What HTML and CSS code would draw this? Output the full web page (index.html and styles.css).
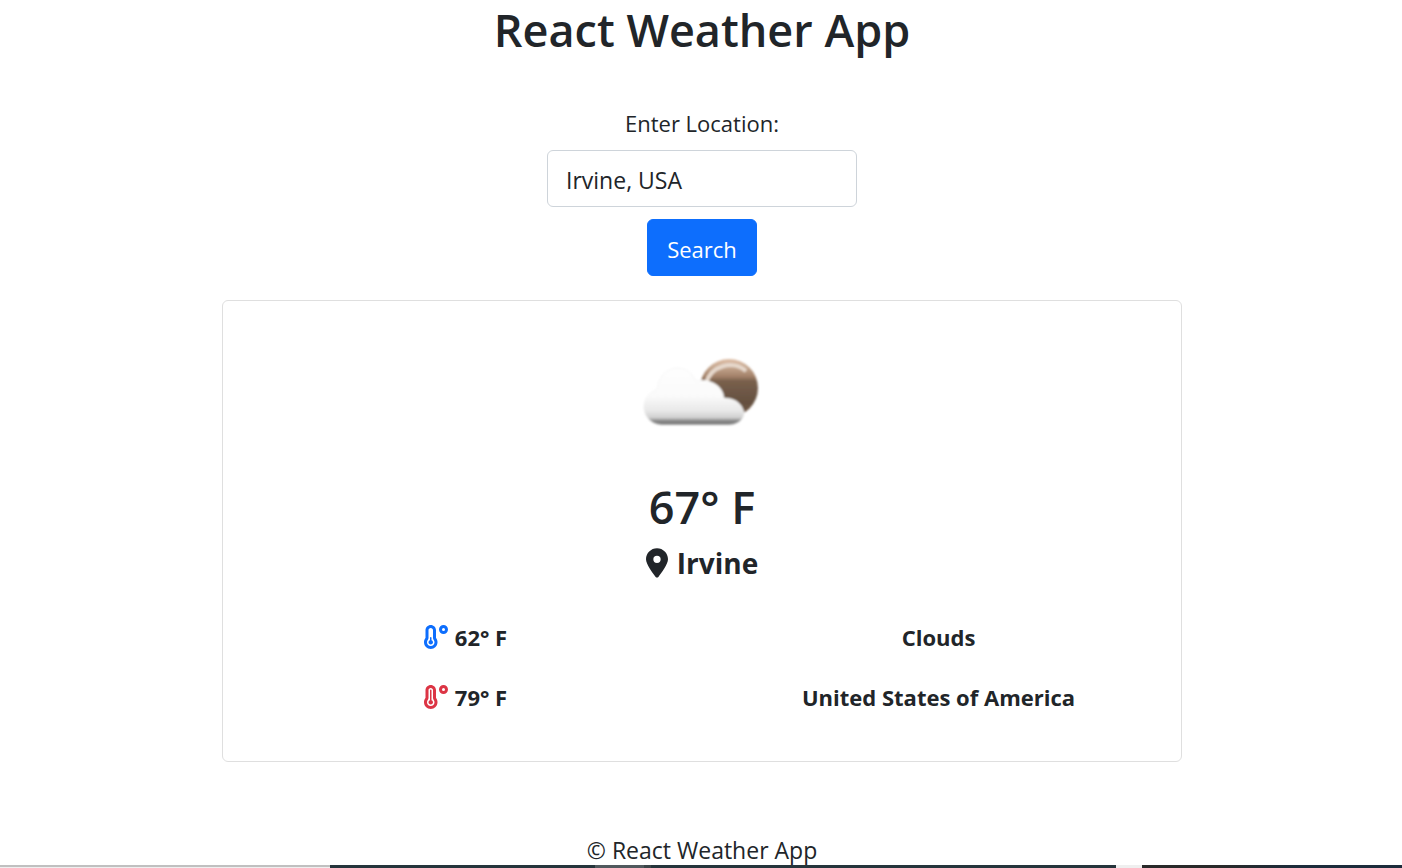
FILE: index.html
```html
<!DOCTYPE html>
<html lang="en">
<head>
<meta charset="utf-8">
<meta name="viewport" content="width=device-width, initial-scale=1">
<title>React Weather App</title>
<link rel="stylesheet" href="styles.css">
</head>
<body>
<div class="app">
  <header><h1 class="title">React Weather App</h1></header>
  <main class="content">
    <form class="search">
      <label class="search-label" for="location">Enter Location:</label>
      <input class="search-input" id="location" type="text" value="Irvine, USA">
      <button class="search-button" type="button">Search</button>
    </form>
    <section class="card">
      <svg class="sky" viewBox="0 0 150 150" role="img" aria-label="Few clouds">
        <defs>
          <linearGradient id="sun" x1="0" y1="0" x2="0" y2="1">
            <stop offset="0" stop-color="#dfbea6"/>
            <stop offset=".14" stop-color="#c5a78f"/>
            <stop offset=".3" stop-color="#a38169"/>
            <stop offset=".38" stop-color="#79604c"/>
            <stop offset=".75" stop-color="#645040"/>
            <stop offset="1" stop-color="#765b49"/>
          </linearGradient>
          <linearGradient id="cloud" gradientUnits="userSpaceOnUse" x1="0" y1="51" x2="0" y2="108">
            <stop offset="0" stop-color="#fefefe"/>
            <stop offset=".5" stop-color="#fafafa"/>
            <stop offset=".75" stop-color="#e8e8e8"/>
            <stop offset=".87" stop-color="#d0d0d0"/>
            <stop offset=".93" stop-color="#858585"/>
            <stop offset="1" stop-color="#777777"/>
          </linearGradient>
          <filter id="soft" x="-10%" y="-10%" width="120%" height="120%"><feGaussianBlur stdDeviation=".9"/></filter>
        </defs>
        <g filter="url(#soft)">
          <circle cx="102" cy="71" r="29" fill="url(#sun)"/>
          <path d="M79 66a25 25 0 0 1 40-12" fill="none" stroke="#e6d8cc" stroke-width="4"/>
          <path d="M34 108a18 18 0 0 1-5-35q2-2 2-5C33 57 42 51 51 51q12 0 18 13c13-3 27 4 28 17q16 0 20 14c1 7-7 13-15 13Z" fill="url(#cloud)" stroke="#f0f0f0" stroke-width=".6"/>
        </g>
      </svg>
      <h2 class="temperature">67° F</h2>
      <h3 class="place">
        <svg class="pin" viewBox="0 0 384 512" aria-hidden="true"><path d="M215.7 499.2C267 435 384 279.4 384 192C384 86 298 0 192 0S0 86 0 192c0 87.4 117 243 168.3 307.2c12.3 15.3 35.1 15.3 47.4 0zM192 128a64 64 0 1 1 0 128 64 64 0 1 1 0-128z"/></svg>
        Irvine
      </h3>
      <div class="details">
        <p class="detail">
          <svg class="thermometer low" viewBox="0 0 512 512" aria-hidden="true"><path d="M416 64a32 32 0 1 1 0 64 32 32 0 1 1 0-64zm0 128A96 96 0 1 0 416 0a96 96 0 1 0 0 192zM96 112c0-26.500 21.500-48 48-48s48 21.500 48 48l0 164.500c0 17.300 7.100 31.900 15.300 42.500C217.800 332.600 224 349.500 224 368c0 44.200-35.800 80-80 80s-80-35.800-80-80c0-18.500 6.200-35.400 16.700-48.900C88.900 308.400 96 293.800 96 276.500L96 112zM144 0C82.100 0 32 50.200 32 112l0 164.500c0 .1-.1 .3-.2 .6c-.2 .6-.8 1.600-1.700 2.800C11.200 304.200 0 334.800 0 368c0 79.500 64.500 144 144 144s144-64.500 144-144c0-33.200-11.200-63.800-30.100-88.100c-.9-1.200-1.500-2.200-1.700-2.800c-.1-.3-.2-.5-.2-.6L256 112C256 50.200 205.900 0 144 0zm0 416c26.500 0 48-21.500 48-48c0-20.900-13.400-38.700-32-45.300L160 272c0-8.800-7.200-16-16-16s-16 7.200-16 16l0 50.700c-18.600 6.600-32 24.400-32 45.300c0 26.500 21.500 48 48 48z"/></svg>
          62° F
        </p>
        <p class="detail">Clouds</p>
        <p class="detail">
          <svg class="thermometer high" viewBox="0 0 512 512" aria-hidden="true"><path d="M416 64a32 32 0 1 1 0 64 32 32 0 1 1 0-64zm0 128A96 96 0 1 0 416 0a96 96 0 1 0 0 192zM96 112c0-26.500 21.500-48 48-48s48 21.500 48 48l0 164.500c0 17.300 7.100 31.900 15.300 42.500C217.800 332.600 224 349.500 224 368c0 44.200-35.800 80-80 80s-80-35.800-80-80c0-18.500 6.200-35.400 16.700-48.900C88.900 308.400 96 293.800 96 276.500L96 112zM144 0C82.100 0 32 50.200 32 112l0 164.500c0 .1-.1 .3-.2 .6c-.2 .6-.8 1.600-1.700 2.800C11.200 304.200 0 334.800 0 368c0 79.500 64.500 144 144 144s144-64.500 144-144c0-33.200-11.200-63.800-30.100-88.100c-.9-1.200-1.500-2.200-1.700-2.800c-.1-.3-.2-.5-.2-.6L256 112C256 50.200 205.900 0 144 0zm0 416c26.500 0 48-21.500 48-48c0-20.900-13.400-38.700-32-45.300L160 112c0-8.800-7.200-16-16-16s-16 7.200-16 16l0 210.700c-18.600 6.600-32 24.400-32 45.300c0 26.500 21.500 48 48 48z"/></svg>
          79° F
        </p>
        <p class="detail">United States of America</p>
      </div>
    </section>
  </main>
  <footer class="footer">© React Weather App</footer>
</div>
<div class="edge" aria-hidden="true"><span class="edge-status"></span><span class="edge-dark"></span><span class="edge-active"></span><span class="edge-split"></span><span class="edge-dark"></span><span class="edge-light"></span><span class="edge-end"></span></div>
</body>
</html>
```
FILE: styles.css
```css
* { box-sizing: border-box; }

body {
  margin: 0;
  background: #fff;
  color: #212529;
  font-family: "Open Sans", "Noto Sans", sans-serif;
  font-size: 22px;
  line-height: 36px;
}

h1, h2, h3, p { margin: 0; }

.app {
  display: flex;
  flex-direction: column;
  min-height: 100vh;
  padding-left: 2px;
  text-align: center;
}

.title {
  font-size: 45px;
  font-weight: 600;
  line-height: 60px;
}

.content {
  flex: 1;
  width: 100%;
  max-width: 960px;
  margin: 0 auto;
  padding-top: 45px;
}

.search {
  display: flex;
  flex-direction: column;
  align-items: center;
}

.search-label { margin-bottom: 9px; }

.search-input,
.search-button {
  height: 57px;
  border: 1px solid #ced4da;
  border-radius: 6px;
  font: inherit;
}

.search-input {
  width: 310px;
  max-width: 100%;
  padding: 2px 18px 0;
  background: #fff;
  color: inherit;
  font-size: 23px;
}

.search-button {
  margin-top: 12px;
  padding: 2px 19px 0;
  border-color: #0d6efd;
  background: #0d6efd;
  color: #fff;
}

.card {
  display: flex;
  flex-direction: column;
  align-items: center;
  margin-top: 24px;
  padding: 16px 6px 46px;
  border: 1px solid #dfdfdf;
  border-radius: 6px;
}

.sky { width: 150px; height: 150px; }

.temperature {
  margin-top: 10px;
  font-size: 45px;
  font-weight: 600;
  line-height: 60px;
}

.place {
  display: flex;
  align-items: center;
  gap: 9px;
  margin-top: 8px;
  font-size: 28px;
  font-weight: 700;
  line-height: 36px;
}

.pin { width: 22px; height: 30px; }

.details {
  display: grid;
  grid-template-columns: 1fr 1fr;
  width: 100%;
  margin-top: 38px;
  row-gap: 24px;
}

.detail {
  display: flex;
  justify-content: center;
  align-items: center;
  gap: 7px;
  font-weight: 700;
}

.thermometer { width: 24px; height: 24px; }

.pin, .thermometer { fill: currentColor; }
.low { color: #0d6efd; }
.high { color: #dc3545; }

.footer {
  margin-top: 24px;
  font-size: 23px;
}

.edge {
  position: fixed;
  right: 0;
  bottom: 0;
  left: 0;
  display: grid;
  grid-template-columns: 330fr 265fr 49fr 7fr 465fr 26fr 260fr;
  height: 3px;
}

.edge-status { border-top: 2px solid #c0c0c0; background: #efefef; }
.edge-dark { background: #25343b; }
.edge-active { background: #50595d; }
.edge-split { background: #3b4548; }
.edge-light { background: #efefef; }
.edge-end { background: linear-gradient(90deg, #292929 30%, #1c2c3b 60%); }
```
